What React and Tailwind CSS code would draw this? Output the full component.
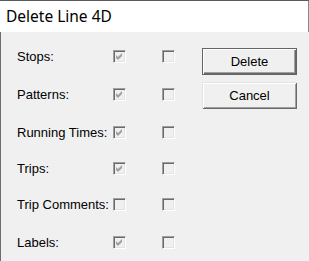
const rows = [
  { label: "Stops:", first: true, mt: "mt-[18px]" },
  { label: "Patterns:", first: true, mt: "mt-[25px]" },
  { label: "Running Times:", first: true, mt: "mt-[25px]" },
  { label: "Trips:", first: true, mt: "mt-[23px]" },
  { label: "Trip Comments:", first: false, mt: "mt-[23px]" },
  { label: "Labels:", first: true, mt: "mt-[25px]" },
];

function CheckBox({ checked }) {
  return (
    <div className="w-[13px] h-[13px] border-t border-l border-[#a0a0a0] border-r border-b border-r-white border-b-white bg-[#f0f0f0] shadow-[inset_1px_1px_0_#696969,inset_-1px_-1px_0_#e3e3e3] flex items-center justify-center">
      {checked && (
        <svg width="7" height="7" viewBox="0 0 7 7" className="block">
          <path d="M0 2 L2 4 L6 0 L6 3 L2 7 L0 5 Z" fill="#a0a0a0" />
        </svg>
      )}
    </div>
  );
}

export default function App() {
  return (
    <div
      className="w-[309px] h-[261px] flex flex-col border-t border-[#5a5a5a] text-black"
      style={{ fontFamily: "'Liberation Sans', Arial, sans-serif" }}
    >
      <div className="h-[31px] bg-white flex items-center pl-[6px] border-r border-[#8a8a8a]">
        <span className="text-[15.5px] leading-none" style={{ fontFamily: "'Noto Sans', sans-serif" }}>
          Delete Line 4D
        </span>
      </div>
      <div className="flex-1 bg-[#f0f0f0] border-l border-[#6d6d6d] flex">
        <div className="flex flex-col pl-[16px]">
          {rows.map((r) => (
            <div key={r.label} className={`flex items-center h-[13px] ${r.mt}`}>
              <span className="w-[96px] text-[13px] leading-none">{r.label}</span>
              <CheckBox checked={r.first} />
              <div className="w-[36px]" />
              <CheckBox checked={false} />
            </div>
          ))}
        </div>
        <div className="flex flex-col ml-[27px] mt-[16px] gap-[7px]">
          <button className="w-[95px] h-[27px] border border-[#646464] bg-[#f0f0f0] shadow-[inset_1px_1px_0_#fff,inset_-1px_-1px_0_#696969,inset_-2px_-2px_0_#a0a0a0] text-[13px] leading-none">
            Delete
          </button>
          <button className="w-[95px] h-[27px] bg-[#f0f0f0] shadow-[inset_1px_1px_0_#e3e3e3,inset_-1px_-1px_0_#696969,inset_2px_2px_0_#fff,inset_-2px_-2px_0_#a0a0a0] text-[13px] leading-none">
            Cancel
          </button>
        </div>
      </div>
    </div>
  );
}
